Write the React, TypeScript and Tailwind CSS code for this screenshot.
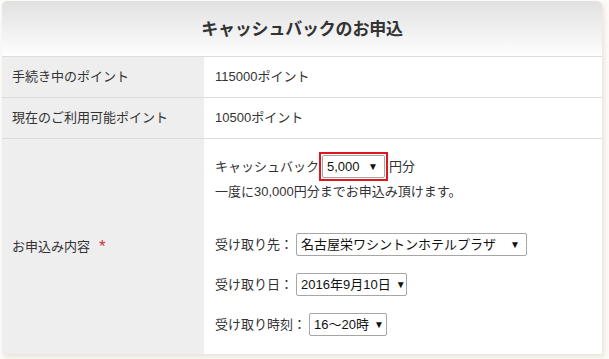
import React from 'react'

const font = { fontFamily: '"Liberation Sans", "Noto Sans CJK JP", sans-serif' }

// Fake select box: text on the left, small ▼ on the right.
function SelectBox({ value, width }: { value: string; width: string }) {
  return (
    <div
      className={`flex h-[23px] items-center justify-between rounded-[2px] border border-[#a6a6a6] bg-white pl-[4px] pr-[6px] text-[13px] text-[#111] ${width}`}
    >
      <span className="whitespace-nowrap">{value}</span>
      <span className="ml-[5px] text-[10px] leading-none">▼</span>
    </div>
  )
}

export default function App() {
  return (
    <div className="min-h-[359px] w-[609px] bg-[#fcfbf8] pl-[2px] pt-[1px]" style={font}>
      <div className="w-[600px] overflow-hidden rounded-t-[5px] bg-white text-[13px] text-[#333] shadow-[2px_3px_5px_rgba(210,200,170,0.45)]">
        <div className="flex h-[56px] items-center justify-center border-b border-[#dcdcdc] bg-gradient-to-b from-[#e1e1e1] to-[#fefefe]">
          <h1 className="pt-[2px] text-[17px] font-bold tracking-[-0.2px] text-[#333]">キャッシュバックのお申込</h1>
        </div>

        <div className="grid grid-cols-[202px_1fr]">
          <div className="flex h-[41px] items-center border-b border-[#dcdcdc] bg-[#eeeeee] pl-[10px]">
            手続き中のポイント
          </div>
          <div className="flex h-[41px] items-center border-b border-[#dcdcdc] pl-[11px]">115000ポイント</div>

          <div className="flex h-[41px] items-center border-b border-[#dcdcdc] bg-[#eeeeee] pl-[10px]">
            現在のご利用可能ポイント
          </div>
          <div className="flex h-[41px] items-center border-b border-[#dcdcdc] pl-[11px]">10500ポイント</div>

          <div className="flex items-center bg-[#eeeeee] pl-[10px]">
            お申込み内容
            <span className="ml-[9px] text-[17px] leading-none text-[#d0323c]">*</span>
          </div>
          <div className="pb-[18px] pl-[11px] pt-[13px]">
            <div className="flex h-[29px] items-center">
              <span>キャッシュバック</span>
              <div className="border-2 border-[#e0161c] p-px">
                <SelectBox value="5,000" width="w-[63px]" />
              </div>
              <span className="ml-px">円分</span>
            </div>
            <p className="mt-[2px] leading-[18px]">一度に30,000円分までお申込み頂けます。</p>

            <div className="mt-[32px] flex items-center gap-[3px]">
              <span>受け取り先：</span>
              <SelectBox value="名古屋栄ワシントンホテルプラザ" width="w-[231px]" />
            </div>
            <div className="mt-[17px] flex items-center gap-[3px]">
              <span>受け取り日：</span>
              <SelectBox value="2016年9月10日" width="w-[111px]" />
            </div>
            <div className="mt-[17px] flex items-center gap-[3px]">
              <span>受け取り時刻：</span>
              <SelectBox value="16～20時" width="w-[78px]" />
            </div>
          </div>
        </div>
      </div>
    </div>
  )
}
